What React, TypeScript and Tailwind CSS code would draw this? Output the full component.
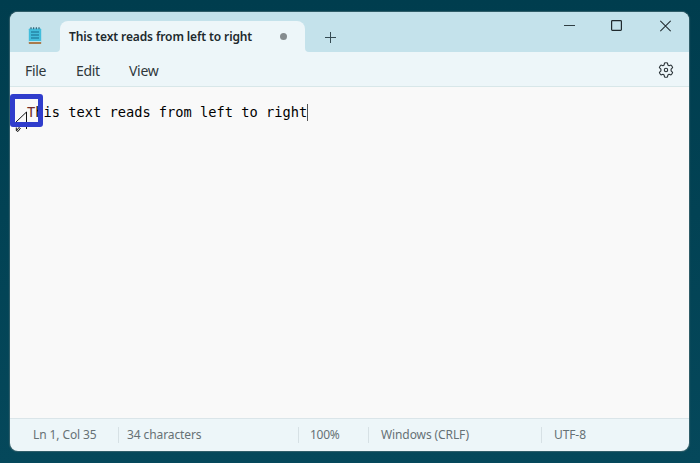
import React from "react";

function NotepadIcon() {
  return (
    <svg className="h-[18px] w-[14px]" viewBox="0 0 14 18">
      <rect x="0.8" y="1.5" width="12.4" height="13.5" rx="0.8" fill="#42bddc" />
      <rect x="0.8" y="14" width="12.4" height="1" fill="#b9e4ee" />
      <rect x="0.8" y="15" width="12.4" height="2" rx="0.4" fill="#a97a4c" />
      <path d="M3 0.2v2M5.7 0.2v2M8.3 0.2v2M11 0.2v2" stroke="#1f5368" strokeWidth="1" />
      <path d="M3 5h8M3 8h8M3 11h8" stroke="#176b8c" strokeWidth="1.2" />
    </svg>
  );
}

function GearIcon() {
  return (
    <svg className="h-4 w-4" viewBox="0 0 16 16" fill="none" stroke="#2b3438" strokeWidth="1.1" strokeLinejoin="round">
      <path d="M6.5 1.1Q8 .5 9.5 1.1L9.9 3.1L11.1 3.8L13 3.1Q14.3 4.2 14.6 5.7L13.1 7.1V8.9L14.6 10.3Q14.3 11.8 13 12.9L11.1 12.2L9.9 12.9L9.5 14.9Q8 15.5 6.5 14.9L6.1 12.9L4.9 12.2L3 12.9Q1.7 11.8 1.4 10.3L2.9 8.9V7.1L1.4 5.7Q1.7 4.2 3 3.1L4.9 3.8L6.1 3.1Z" />
      <circle cx="8" cy="8" r="1.7" />
    </svg>
  );
}

export default function App() {
  return (
    <div className="h-[463px] w-[700px] overflow-hidden bg-linear-to-b from-[#003d4e] to-[#05485b] px-[10px] pt-3 pr-[11px] font-['Noto_Sans','Open_Sans',sans-serif]">
      <div className="relative flex h-[439px] w-[679px] flex-col rounded-lg bg-[#edf6f9] shadow-[0_0_1px_0.5px_#35616c]">
        <header className="flex h-10 shrink-0 rounded-t-lg bg-[#c4e2eb]">
          <div className="flex w-[50px] items-start pt-[15px] pl-[18px]">
            <NotepadIcon />
          </div>
          <div className="relative mt-[9px] flex h-[31px] w-[245px] items-center rounded-t-lg bg-[#edf6f9] pl-[9px]">
            <svg className="absolute bottom-0 -left-1 h-1 w-1" viewBox="0 0 4 4"><path d="M4 0Q4 4 0 4H4Z" fill="#edf6f9" /></svg>
            <svg className="absolute -right-1 bottom-0 h-1 w-1" viewBox="0 0 4 4"><path d="M0 0Q0 4 4 4H0Z" fill="#edf6f9" /></svg>
            <span className="w-[184px] pt-px text-[12px] leading-4 font-semibold tracking-[-0.12px] whitespace-nowrap text-[#20292d]">This text reads from left to right</span>
            <span className="ml-[27px] size-[7px] rounded-full bg-[#858c8f]" />
          </div>
          <svg className="mt-[20px] ml-[20px] h-[11px] w-[11px]" viewBox="0 0 11 11"><path d="M5.5 0V11M0 5.5H11" stroke="#354a52" /></svg>
          <div className="mt-2 mr-[18px] ml-auto flex">
            <svg className="h-3 w-[11px]" viewBox="0 0 11 12"><path d="M0 5.5H11" stroke="#303e43" /></svg>
            <svg className="mr-[38px] ml-9 h-3 w-[11px]" viewBox="0 0 11 12"><rect x="0.6" y="0.6" width="9.8" height="9.8" rx="0.8" fill="none" stroke="#202a2e" strokeWidth="1.2" /></svg>
            <svg className="h-3 w-[11px]" viewBox="0 0 11 12"><path d="M0.3 0.8L10.7 11.2M10.7 0.8L0.3 11.2" stroke="#202a2e" strokeWidth="1.1" /></svg>
          </div>
        </header>
        <nav className="flex h-[35px] shrink-0 items-center border-b border-[#d8e7e9] px-[15px] pt-[2px] text-[14px] tracking-[-0.3px] text-[#30383b]">
          <span className="w-[51px]">File</span>
          <span className="w-[53px]">Edit</span>
          <span>View</span>
          <span className="ml-auto"><GearIcon /></span>
        </nav>
        <main className="flex min-h-0 flex-1 items-start bg-[#f9f9f9] pt-[17px] pl-[17px]">
          <span className="font-['DejaVu_Sans_Mono',monospace] text-[13.7px] leading-[17px] whitespace-pre text-black"><span className="text-[#742b26]">T</span>his text reads from left to right</span>
          <span className="h-[17px] w-px bg-[#555]" />
        </main>
        <footer className="flex h-[33px] shrink-0 items-center rounded-b-lg border-t border-[#dae5e9] text-[12px] tracking-[-0.1px] whitespace-nowrap text-[#667175]">
          <span className="w-[108px] pl-[23px]">Ln 1, Col 35</span>
          <span className="flex h-4 w-[180px] items-center border-l border-[#d7e1e5] pl-[8px]">34 characters</span>
          <span className="flex h-4 w-[70px] items-center border-l border-[#d7e1e5] pl-[11px] tracking-[-0.3px]">100%</span>
          <span className="flex h-4 w-[173px] items-center border-l border-[#d7e1e5] pl-[12px]">Windows (CRLF)</span>
          <span className="flex h-4 items-center border-l border-[#d7e1e5] pl-[12px]">UTF-8</span>
        </footer>
        <div className="absolute top-[82px] left-0 h-[33px] w-[33px] rounded-[3px] border-5 border-[#303dcc]" />
        <svg className="absolute top-[98px] left-[4px] h-[24px] w-[16px]" viewBox="0 0 16 24" fill="none" stroke="#111">
          <path d="M2 12L12.5 2V12M12.5 17V19" strokeWidth="1" />
          <path d="M2.5 20.5L5.5 17M6.5 18L4 21.5L2.3 20.5V17.5" strokeWidth="1" />
        </svg>
      </div>
    </div>
  );
}
